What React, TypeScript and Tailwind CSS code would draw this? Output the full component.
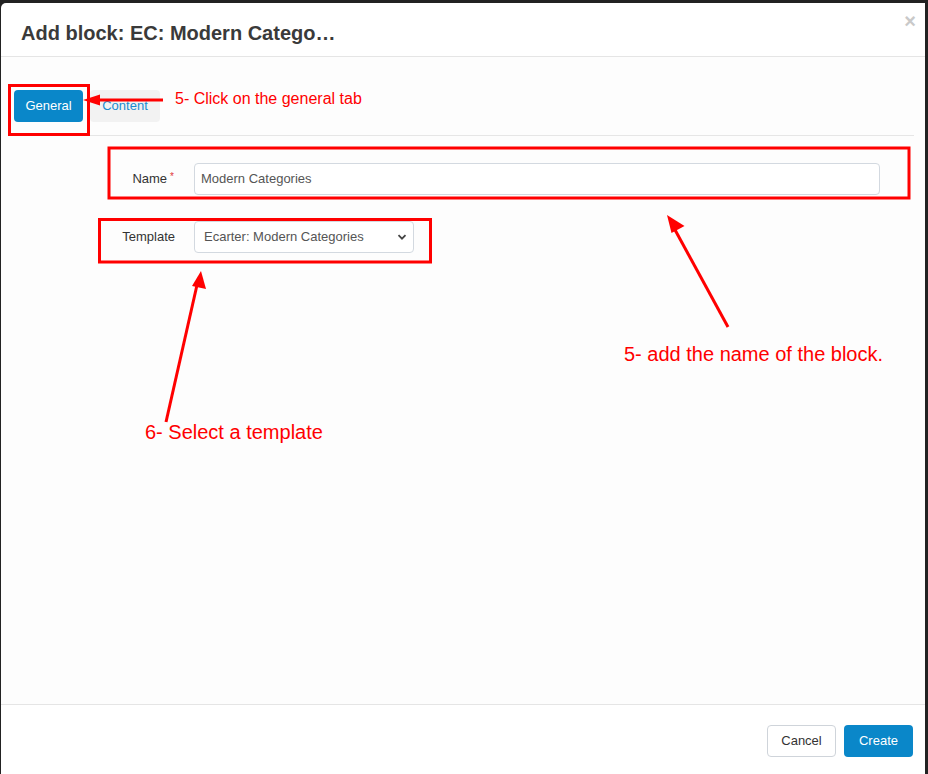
import React from "react";

const RED = "#ff0000";

function Overlay() {
  return (
    <div className="pointer-events-none absolute inset-0">
      <svg width="928" height="774" className="absolute left-0 top-0">
        {/* General tab box */}
        <rect x="9.5" y="85.5" width="79" height="49" fill="none" stroke={RED} strokeWidth="3" />
        {/* arrow to General */}
        <line x1="163" y1="100" x2="98" y2="100" stroke={RED} strokeWidth="3" />
        <polygon points="83,100 100,94.5 100,105.5" fill={RED} />
        {/* Name box */}
        <rect x="109" y="148" width="800" height="50" fill="none" stroke={RED} strokeWidth="3" />
        {/* Template box */}
        <rect x="99.5" y="219.5" width="331" height="42.5" fill="none" stroke={RED} strokeWidth="3" />
        {/* arrow to name */}
        <line x1="728" y1="327" x2="674" y2="228" stroke={RED} strokeWidth="3" />
        <polygon points="667,215 684.5,226 671.5,233" fill={RED} />
        {/* arrow to template */}
        <line x1="166" y1="422" x2="197" y2="285" stroke={RED} strokeWidth="3" />
        <polygon points="201,271 206,289 192,286" fill={RED} />
      </svg>
      <div className="absolute left-[175px] top-[90px] text-[16px] leading-[18px] text-[#ff0000] whitespace-nowrap">
        5- Click on the general tab
      </div>
      <div className="absolute left-[624px] top-[343px] text-[20px] leading-[22px] text-[#ff0000] whitespace-nowrap">
        5- add the name of the block.
      </div>
      <div className="absolute left-[145px] top-[421px] text-[20px] leading-[22px] text-[#ff0000] whitespace-nowrap">
        6- Select a template
      </div>
    </div>
  );
}

export default function App() {
  return (
    <div
      className="relative w-[928px] h-[774px] overflow-hidden bg-[#222222] pt-[3px] pl-[1px] pr-[3px]"
      style={{ fontFamily: '"Liberation Sans", Arial, sans-serif' }}
    >
      <div className="flex h-full flex-col rounded-tl-[5px] bg-white">
        {/* header */}
        <div className="flex h-[54px] items-start justify-between border-b border-[#e5e5e5] pl-[20px] pr-[9px]">
          <h4 className="mt-[18px] text-[20px] font-bold leading-[24px] text-[#3a3a3a]">
            Add block: EC: Modern Catego…
          </h4>
          <span className="mt-[6px] text-[20px] font-bold leading-[24px] text-[#c9c9c9]">×</span>
        </div>
        {/* body */}
        <div className="flex-1 bg-[#fdfdfd] pl-[13px] pr-[11px] pt-[33px]">
          <div className="flex gap-[7px] border-b border-[#e6e6e6] pb-[13px]">
            <button className="h-[32px] w-[69px] rounded-[4px] bg-[#0a87c9] text-[13px] text-white">
              General
            </button>
            <button className="h-[32px] w-[70px] rounded-[4px] bg-[#f2f2f2] text-[13px] text-[#1a8bd0]">
              Content
            </button>
          </div>
          <div className="flex flex-col gap-[26px] pt-[27px] pr-[34px]">
            <div className="flex items-center">
              <label className="w-[162px] pr-[2px] text-right text-[13px] text-[#333]">
                Name<span className="relative -top-[3px] ml-[3px] text-[10px] text-[#e0373a]">*</span>
              </label>
              <div className="ml-[18px] flex h-[32px] flex-1 items-center rounded-[4px] border border-[#d3d9e0] bg-white pl-[6px] text-[13px] text-[#555]">
                Modern Categories
              </div>
            </div>
            <div className="flex items-center">
              <label className="w-[162px] pr-[1px] text-right text-[13px] text-[#333]">Template</label>
              <div className="ml-[18px] flex h-[32px] w-[220px] items-center justify-between rounded-[4px] border border-[#d3d9e0] bg-white pl-[9px] pr-[6px] text-[13px] text-[#555]">
                <span>Ecarter: Modern Categories</span>
                <svg width="10" height="10" viewBox="0 0 10 10">
                  <path d="M1.5 3.2 L5 6.7 L8.5 3.2" fill="none" stroke="#444" strokeWidth="1.8" />
                </svg>
              </div>
            </div>
          </div>
        </div>
        {/* footer */}
        <div className="flex h-[70px] items-start justify-end gap-[8px] border-t border-[#e5e5e5] pr-[12px] pt-[20px]">
          <button className="h-[32px] w-[69px] rounded-[4px] border border-[#cfd4da] bg-white text-[13px] text-[#333]">
            Cancel
          </button>
          <button className="h-[32px] w-[69px] rounded-[4px] bg-[#0a87c9] text-[13px] text-white">
            Create
          </button>
        </div>
      </div>
      <Overlay />
    </div>
  );
}
